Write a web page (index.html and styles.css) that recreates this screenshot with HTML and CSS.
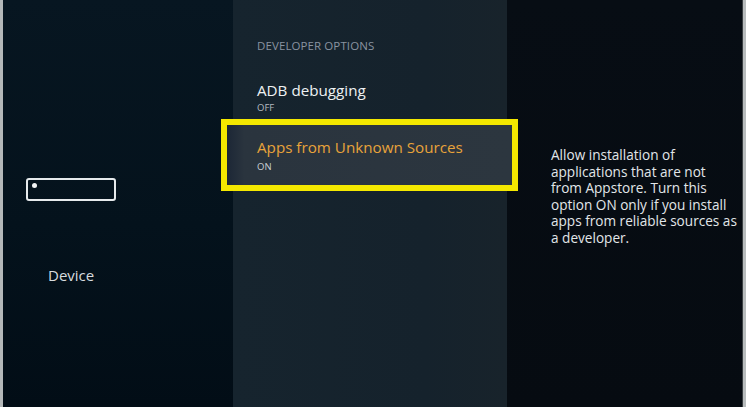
FILE: index.html
```html
<!DOCTYPE html>
<html>
<head>
<meta charset="utf-8">
<link rel="stylesheet" href="styles.css">
</head>
<body>
<div class="screen">
  <div class="edge-left"></div>
  <nav class="nav">
    <div class="nav-box"><span class="nav-dot"></span></div>
    <div class="nav-label">Device</div>
  </nav>
  <main class="menu">
    <div class="menu-title">DEVELOPER OPTIONS</div>
    <div class="item">
      <div class="item-name">ADB debugging</div>
      <div class="item-value">OFF</div>
    </div>
    <div class="item item-selected">
      <div class="item-inner">
        <div class="item-name">Apps from Unknown Sources</div>
        <div class="item-value">ON</div>
      </div>
    </div>
  </main>
  <aside class="info">
    <p class="info-text">Allow installation of applications that are not from Appstore. Turn this option ON only if you install apps from reliable sources as a developer.</p>
  </aside>
  <div class="edge-right"></div>
</div>
</body>
</html>
```
FILE: styles.css
```css
html, body {
  margin: 0;
  padding: 0;
  background: #050b12;
}
.screen {
  display: flex;
  width: 746px;
  height: 407px;
  overflow: hidden;
  font-family: "Open Sans", "Noto Sans", sans-serif;
}
.edge-left {
  width: 3px;
  background: #b4b8b9;
  flex: none;
}
.edge-right {
  width: 4px;
  flex: none;
  background: linear-gradient(90deg, #3a3f42 0 1px, #b8bcbd 1px);
}
.nav {
  width: 230px;
  flex: none;
  background: linear-gradient(180deg, #071621 0%, #04121c 55%, #020d16 100%);
  display: flex;
  flex-direction: column;
  padding: 178px 0 0 23px;
  box-sizing: border-box;
}
.nav-box {
  width: 86px;
  height: 19px;
  border: 2px solid #e6eaec;
  border-radius: 3px;
  position: relative;
  box-sizing: content-box;
}
.nav-dot {
  position: absolute;
  left: 4px;
  top: 3px;
  width: 5px;
  height: 5px;
  border-radius: 50%;
  background: #f2f4f5;
}
.nav-label {
  margin: 64px 0 0 22px;
  font-size: 15px;
  color: #d7dcdf;
  line-height: 20px;
}
.menu {
  width: 274px;
  flex: none;
  background: linear-gradient(90deg, #16242e 0%, #15222c 70%, #18232b 100%);
  padding: 38px 0 0 24px;
  box-sizing: border-box;
  position: relative;
  z-index: 1;
}
.menu-title {
  font-size: 11.5px;
  color: #8993a0;
  letter-spacing: 0.1px;
  line-height: 16px;
}
.item {
  margin-top: 26px;
}
.item-name {
  font-size: 15.2px;
  line-height: 20px;
  color: #eef1f3;
}
.item-value {
  font-size: 9.5px;
  line-height: 12px;
  color: #b3bac0;
  margin-top: 2px;
}
.item-selected {
  margin: 5px -11px 0 -36px;
  border: 6px solid #f4e800;
  background: #1a2128;
}
.item-inner {
  background: linear-gradient(90deg, #1c2736 0%, #2a343e 6%, #2c363f 100%);
  padding: 12px 0 0 30px;
  height: 60px;
  box-sizing: border-box;
}
.item-selected .item-name {
  color: #e8a33a;
}
.item-selected .item-value {
  color: #c9ced2;
  margin-top: 4px;
}
.info {
  flex: 1;
  background: linear-gradient(180deg, #070d14 0%, #060b11 100%);
  padding: 147px 0 0 44px;
}
.info-text {
  margin: 0;
  width: 186px;
  font-size: 13.6px;
  line-height: 16.5px;
  color: #e2e6e9;
}
```
